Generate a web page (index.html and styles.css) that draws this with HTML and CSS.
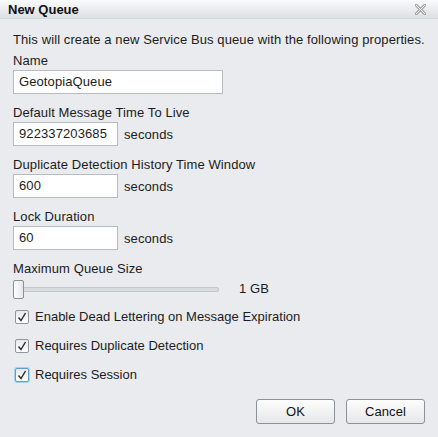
FILE: index.html
```html
<!DOCTYPE html>
<html>
<head>
<meta charset="utf-8">
<link rel="stylesheet" href="styles.css">
</head>
<body>
<div class="dialog">
  <div class="titlebar">
    <span class="title">New Queue</span>
    <svg class="close" width="11" height="11" viewBox="0 0 11 11">
      <path d="M1 1 L10 10 M10 1 L1 10" stroke="#a3a3a3" stroke-width="3" stroke-linecap="square"/>
      <path d="M1 1 L10 10 M10 1 L1 10" stroke="#f4f4f4" stroke-width="1"/>
    </svg>
  </div>
  <div class="content">
    <p class="intro">This will create a new Service Bus queue with the following properties.</p>
    <div class="field first">
      <label class="lbl">Name</label>
      <div class="row"><div class="input wide">GeotopiaQueue</div></div>
    </div>
    <div class="field">
      <label class="lbl">Default Message Time To Live</label>
      <div class="row"><div class="input">922337203685</div><span class="unit">seconds</span></div>
    </div>
    <div class="field">
      <label class="lbl">Duplicate Detection History Time Window</label>
      <div class="row"><div class="input">600</div><span class="unit">seconds</span></div>
    </div>
    <div class="field">
      <label class="lbl">Lock Duration</label>
      <div class="row"><div class="input">60</div><span class="unit">seconds</span></div>
    </div>
    <div class="field">
      <label class="lbl">Maximum Queue Size</label>
      <div class="slider-row">
        <div class="slider"><div class="track"></div><div class="thumb"></div></div>
        <span class="size">1 GB</span>
      </div>
    </div>
    <div class="checks">
      <div class="check"><span class="box"><svg width="12" height="12" viewBox="0 0 12 12"><path d="M2.5 6.5 L5 9.5 L9.5 2" fill="none" stroke="#2a2a2a" stroke-width="1.4"/></svg></span><span>Enable Dead Lettering on Message Expiration</span></div>
      <div class="check"><span class="box"><svg width="12" height="12" viewBox="0 0 12 12"><path d="M2.5 6.5 L5 9.5 L9.5 2" fill="none" stroke="#2a2a2a" stroke-width="1.4"/></svg></span><span>Requires Duplicate Detection</span></div>
      <div class="check"><span class="box focus"><svg width="12" height="12" viewBox="0 0 12 12"><path d="M2.5 6.5 L5 9.5 L9.5 2" fill="none" stroke="#2a2a2a" stroke-width="1.4"/></svg></span><span>Requires Session</span></div>
    </div>
    <div class="buttons">
      <div class="btn">OK</div>
      <div class="btn">Cancel</div>
    </div>
  </div>
</div>
</body>
</html>
```
FILE: styles.css
```css
html, body {
  margin: 0;
  padding: 0;
}
body {
  width: 438px;
  height: 437px;
  background: #e9ebee;
  font-family: "Liberation Sans", Arial, sans-serif;
  font-size: 13px;
  letter-spacing: 0.1px;
  color: #1c1c1c;
  overflow: hidden;
}
.dialog {
  width: 438px;
  height: 437px;
  display: flex;
  flex-direction: column;
}
.titlebar {
  box-sizing: border-box;
  height: 19px;
  background: linear-gradient(#f9fafb, #dde0e4);
  border-bottom: 1px solid #d4d7db;
  display: flex;
  align-items: center;
  justify-content: space-between;
  padding: 0 12px 0 8px;
  flex-shrink: 0;
}
.title {
  font-weight: bold;
  font-size: 13px;
  color: #111;
  letter-spacing: 0;
}
.close {
  display: block;
}
.content {
  padding: 0 13px;
  display: flex;
  flex-direction: column;
}
.intro {
  margin: 13px 0 0 0;
  line-height: 16px;
}
.field {
  display: flex;
  flex-direction: column;
  margin-top: 11px;
}
.field.first {
  margin-top: 5px;
}
.lbl {
  line-height: 16px;
}
.row {
  display: flex;
  align-items: center;
  margin-top: 1px;
}
.input {
  box-sizing: border-box;
  width: 105px;
  height: 24px;
  background: #fff;
  border: 1px solid #b7bcc3;
  padding: 0 5px;
  line-height: 22px;
}
.input.wide {
  width: 210px;
}
.unit {
  margin-left: 6px;
}
.slider-row {
  display: flex;
  align-items: center;
  margin-top: 1px;
  height: 20px;
}
.slider {
  position: relative;
  width: 206px;
  height: 20px;
}
.track {
  position: absolute;
  left: 0;
  right: 0;
  top: 9px;
  height: 3px;
  background: #d9dcdf;
  border: 1px solid #c3c7cc;
  border-radius: 2px;
}
.thumb {
  position: absolute;
  left: 0;
  top: 2px;
  width: 9px;
  height: 17px;
  background: linear-gradient(90deg, #ffffff, #e4e6e9);
  border: 1px solid #8a9099;
  border-radius: 2px;
}
.size {
  margin-left: 20px;
}
.checks {
  display: flex;
  flex-direction: column;
  gap: 13px;
  margin-top: 11px;
  padding-left: 2px;
  letter-spacing: 0;
}
.check {
  display: flex;
  align-items: center;
  gap: 6px;
  line-height: 16px;
}
.box {
  box-sizing: border-box;
  width: 14px;
  height: 14px;
  border: 1px solid #8f959c;
  border-radius: 2px;
  background: linear-gradient(#e6e8eb, #fff);
  display: flex;
  align-items: center;
  justify-content: center;
}
.box svg {
  display: block;
}
.box.focus {
  border-color: #5b9ec9;
  box-shadow: 0 0 0 1px #a9d2ef;
}
.buttons {
  display: flex;
  justify-content: flex-end;
  gap: 11px;
  margin-top: 16px;
}
.btn {
  box-sizing: border-box;
  width: 79px;
  height: 25px;
  border: 1px solid #8c9097;
  border-radius: 3px;
  background: linear-gradient(#fdfdfd, #e6e7e9);
  text-align: center;
  line-height: 23px;
  color: #111;
}
```
